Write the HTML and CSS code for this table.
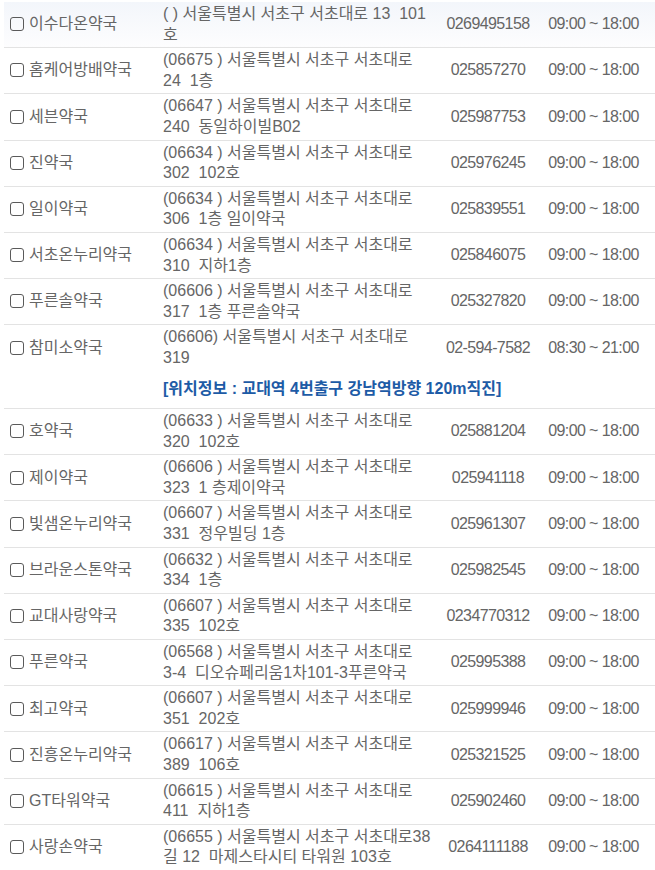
FILE: index.html
```html
<!DOCTYPE html>
<html lang="ko">
<head>
    <meta charset="UTF-8">
    <meta name="viewport" content="width=device-width, initial-scale=1.0">
    <title>약국 목록</title>
    <link rel="stylesheet" href="styles.css">
</head>
<body>
    <table class="store-list">
        <colgroup>
            <col class="col-name">
            <col class="col-addr">
            <col class="col-tel">
            <col class="col-time">
        </colgroup>
        <tbody>
            <tr class="first">
                <td class="name"><span class="check"></span>이수다온약국</td>
                <td class="addr">( ) 서울특별시 서초구 서초대로 13&nbsp; 101 호</td>
                <td class="tel">0269495158</td>
                <td class="time">09:00 ~ 18:00</td>
            </tr>
            <tr>
                <td class="name"><span class="check"></span>홈케어방배약국</td>
                <td class="addr">(06675 ) 서울특별시 서초구 서초대로 24&nbsp; 1층</td>
                <td class="tel">025857270</td>
                <td class="time">09:00 ~ 18:00</td>
            </tr>
            <tr>
                <td class="name"><span class="check"></span>세븐약국</td>
                <td class="addr">(06647 ) 서울특별시 서초구 서초대로 240&nbsp; 동일하이빌B02</td>
                <td class="tel">025987753</td>
                <td class="time">09:00 ~ 18:00</td>
            </tr>
            <tr>
                <td class="name"><span class="check"></span>진약국</td>
                <td class="addr">(06634 ) 서울특별시 서초구 서초대로 302&nbsp; 102호</td>
                <td class="tel">025976245</td>
                <td class="time">09:00 ~ 18:00</td>
            </tr>
            <tr>
                <td class="name"><span class="check"></span>일이약국</td>
                <td class="addr">(06634 ) 서울특별시 서초구 서초대로 306&nbsp; 1층 일이약국</td>
                <td class="tel">025839551</td>
                <td class="time">09:00 ~ 18:00</td>
            </tr>
            <tr>
                <td class="name"><span class="check"></span>서초온누리약국</td>
                <td class="addr">(06634 ) 서울특별시 서초구 서초대로 310&nbsp; 지하1층</td>
                <td class="tel">025846075</td>
                <td class="time">09:00 ~ 18:00</td>
            </tr>
            <tr>
                <td class="name"><span class="check"></span>푸른솔약국</td>
                <td class="addr">(06606 ) 서울특별시 서초구 서초대로 317&nbsp; 1층 푸른솔약국</td>
                <td class="tel">025327820</td>
                <td class="time">09:00 ~ 18:00</td>
            </tr>
            <tr class="has-info">
                <td class="name"><span class="check"></span>참미소약국</td>
                <td class="addr">(06606) 서울특별시 서초구 서초대로 319</td>
                <td class="tel">02-594-7582</td>
                <td class="time">08:30 ~ 21:00</td>
            </tr>
            <tr class="info-row">
                <td></td>
                <td colspan="3" class="info">[위치정보 : 교대역 4번출구 강남역방향 120m직진]</td>
            </tr>
            <tr>
                <td class="name"><span class="check"></span>호약국</td>
                <td class="addr">(06633 ) 서울특별시 서초구 서초대로 320&nbsp; 102호</td>
                <td class="tel">025881204</td>
                <td class="time">09:00 ~ 18:00</td>
            </tr>
            <tr>
                <td class="name"><span class="check"></span>제이약국</td>
                <td class="addr">(06606 ) 서울특별시 서초구 서초대로 323&nbsp; 1 층제이약국</td>
                <td class="tel">025941118</td>
                <td class="time">09:00 ~ 18:00</td>
            </tr>
            <tr>
                <td class="name"><span class="check"></span>빛샘온누리약국</td>
                <td class="addr">(06607 ) 서울특별시 서초구 서초대로 331&nbsp; 정우빌딩 1층</td>
                <td class="tel">025961307</td>
                <td class="time">09:00 ~ 18:00</td>
            </tr>
            <tr>
                <td class="name"><span class="check"></span>브라운스톤약국</td>
                <td class="addr">(06632 ) 서울특별시 서초구 서초대로 334&nbsp; 1층</td>
                <td class="tel">025982545</td>
                <td class="time">09:00 ~ 18:00</td>
            </tr>
            <tr>
                <td class="name"><span class="check"></span>교대사랑약국</td>
                <td class="addr">(06607 ) 서울특별시 서초구 서초대로 335&nbsp; 102호</td>
                <td class="tel">0234770312</td>
                <td class="time">09:00 ~ 18:00</td>
            </tr>
            <tr>
                <td class="name"><span class="check"></span>푸른약국</td>
                <td class="addr">(06568 ) 서울특별시 서초구 서초대로 <span class="nowrap">3-4</span>&nbsp; 디오슈페리움1차101-3푸른약국</td>
                <td class="tel">025995388</td>
                <td class="time">09:00 ~ 18:00</td>
            </tr>
            <tr>
                <td class="name"><span class="check"></span>최고약국</td>
                <td class="addr">(06607 ) 서울특별시 서초구 서초대로 351&nbsp; 202호</td>
                <td class="tel">025999946</td>
                <td class="time">09:00 ~ 18:00</td>
            </tr>
            <tr>
                <td class="name"><span class="check"></span>진흥온누리약국</td>
                <td class="addr">(06617 ) 서울특별시 서초구 서초대로 389&nbsp; 106호</td>
                <td class="tel">025321525</td>
                <td class="time">09:00 ~ 18:00</td>
            </tr>
            <tr>
                <td class="name"><span class="check"></span>GT타워약국</td>
                <td class="addr">(06615 ) 서울특별시 서초구 서초대로 411&nbsp; 지하1층</td>
                <td class="tel">025902460</td>
                <td class="time">09:00 ~ 18:00</td>
            </tr>
            <tr>
                <td class="name"><span class="check"></span>사랑손약국</td>
                <td class="addr">(06655 ) 서울특별시 서초구 서초대로38 길 12&nbsp; 마제스타시티 타워원 103호</td>
                <td class="tel">0264111188</td>
                <td class="time">09:00 ~ 18:00</td>
            </tr>
        </tbody>
    </table>
</body>
</html>
```

FILE: styles.css
```css
body {
    margin: 0;
    padding: 2px 0 0 4px;
    background: #fff;
    font-family: "Liberation Sans", "Noto Sans CJK KR", sans-serif;
    font-size: 16px;
    color: #666;
}

.store-list {
    width: 651px;
    border-collapse: collapse;
    table-layout: fixed;
}

.col-name { width: 159px; }
.col-addr { width: 276px; }
.col-tel { width: 98px; }
.col-time { width: 118px; }

.store-list tr {
    border-bottom: 1px solid #e3e3e3;
}

.store-list tr.first {
    background: linear-gradient(#f3f6fb, #fdfdfe);
}

.store-list td {
    padding: 2px 0;
    line-height: 20.6px;
    vertical-align: middle;
}

.store-list td.name {
    padding-left: 6px;
    white-space: nowrap;
}

.check {
    display: inline-block;
    width: 12px;
    height: 12px;
    border: 1.5px solid #5a5a5a;
    border-radius: 3px;
    margin-right: 5px;
    vertical-align: -2px;
}

.store-list td.addr {
    padding-right: 6px;
}

.nowrap {
    white-space: nowrap;
}

.store-list td.tel,
.store-list td.time {
    text-align: center;
    letter-spacing: -0.6px;
}

.store-list td.time {
    padding-right: 5px;
}

.store-list tr.has-info {
    border-bottom: none;
}

.store-list td.info {
    padding: 8px 0 9px;
    font-weight: bold;
    color: #1d5ba6;
}
```
